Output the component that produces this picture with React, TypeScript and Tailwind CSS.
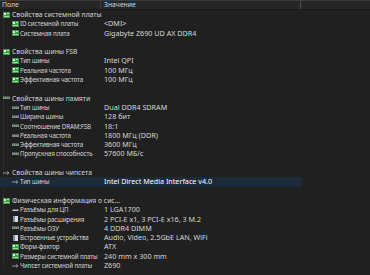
import React from 'react'

type Icon = 'board' | 'ram' | 'chip' | 'socket' | 'card'
type Row =
  | { kind: 'blank' }
  | { kind: 'group'; icon: Icon; label: string }
  | { kind: 'item'; icon: Icon; label: string; value: string; selected?: boolean }

const rows: Row[] = [
  { kind: 'group', icon: 'board', label: 'Свойства системной платы' },
  { kind: 'item', icon: 'board', label: 'ID системной платы', value: '<DMI>' },
  { kind: 'item', icon: 'board', label: 'Системная плата', value: 'Gigabyte Z690 UD AX DDR4' },
  { kind: 'blank' },
  { kind: 'group', icon: 'board', label: 'Свойства шины FSB' },
  { kind: 'item', icon: 'board', label: 'Тип шины', value: 'Intel QPI' },
  { kind: 'item', icon: 'board', label: 'Реальная частота', value: '100 МГц' },
  { kind: 'item', icon: 'board', label: 'Эффективная частота', value: '100 МГц' },
  { kind: 'blank' },
  { kind: 'group', icon: 'ram', label: 'Свойства шины памяти' },
  { kind: 'item', icon: 'ram', label: 'Тип шины', value: 'Dual DDR4 SDRAM' },
  { kind: 'item', icon: 'ram', label: 'Ширина шины', value: '128 бит' },
  { kind: 'item', icon: 'ram', label: 'Соотношение DRAM:FSB', value: '18:1' },
  { kind: 'item', icon: 'ram', label: 'Реальная частота', value: '1800 МГц (DDR)' },
  { kind: 'item', icon: 'ram', label: 'Эффективная частота', value: '3600 МГц' },
  { kind: 'item', icon: 'ram', label: 'Пропускная способность', value: '57600 МБ/с' },
  { kind: 'blank' },
  { kind: 'group', icon: 'chip', label: 'Свойства шины чипсета' },
  { kind: 'item', icon: 'chip', label: 'Тип шины', value: 'Intel Direct Media Interface v4.0', selected: true },
  { kind: 'blank' },
  { kind: 'group', icon: 'board', label: 'Физическая информация о сис...' },
  { kind: 'item', icon: 'socket', label: 'Разъёмы для ЦП', value: '1 LGA1700' },
  { kind: 'item', icon: 'card', label: 'Разъёмы расширения', value: '2 PCI-E x1, 3 PCI-E x16, 3 M.2' },
  { kind: 'item', icon: 'ram', label: 'Разъёмы ОЗУ', value: '4 DDR4 DIMM' },
  { kind: 'item', icon: 'card', label: 'Встроенные устройства', value: 'Audio, Video, 2.5GbE LAN, WiFi' },
  { kind: 'item', icon: 'board', label: 'Форм-фактор', value: 'ATX' },
  { kind: 'item', icon: 'board', label: 'Размеры системной платы', value: '240 mm x 300 mm' },
  { kind: 'item', icon: 'chip', label: 'Чипсет системной платы', value: 'Z690' },
]

function RowIcon({ icon }: { icon: Icon }) {
  if (icon === 'board')
    return (
      <svg width="7" height="6" viewBox="0 0 7 6" className="shrink-0">
        <rect x="0" y="0" width="7" height="6" fill="#3f9a4a" />
        <rect x="1" y="1" width="2" height="2" fill="#d9f0d0" />
        <rect x="4" y="1" width="2" height="1" fill="#b8e2b0" />
        <rect x="1" y="4" width="5" height="1" fill="#a8d8a0" />
      </svg>
    )
  if (icon === 'ram')
    return (
      <svg width="7" height="6" viewBox="0 0 7 6" className="shrink-0">
        <rect x="0" y="1.5" width="7" height="2.5" fill="#8a8f8a" />
        <rect x="1" y="2" width="1" height="1.5" fill="#4f7f4f" />
        <rect x="3" y="2" width="1" height="1.5" fill="#4f7f4f" />
        <rect x="5" y="2" width="1" height="1.5" fill="#4f7f4f" />
      </svg>
    )
  if (icon === 'chip')
    return (
      <svg width="7" height="6" viewBox="0 0 7 6" className="shrink-0">
        <path d="M0 3h6M4 1.5 6 3 4 4.5" stroke="#8d96a0" strokeWidth="1" fill="none" />
      </svg>
    )
  if (icon === 'socket')
    return (
      <svg width="7" height="6" viewBox="0 0 7 6" className="shrink-0">
        <rect x="0.5" y="2.5" width="6" height="1.5" fill="#c8c8c8" />
      </svg>
    )
  return (
    <svg width="7" height="6" viewBox="0 0 7 6" className="shrink-0">
      <rect x="1" y="0" width="5" height="6" fill="#d8dde3" />
      <rect x="1" y="0" width="2" height="6" fill="#7c8aa0" />
    </svg>
  )
}

export default function App() {
  return (
    <div
      className="w-[370px] h-[275px] overflow-hidden bg-[#202020] text-[#d6d6d6] text-[7.2px] leading-[9.3px]"
      style={{ fontFamily: '"Noto Sans", "Open Sans", sans-serif' }}
    >
      {/* шапка таблицы */}
      <div className="flex h-[10px] bg-[#262626] border-t border-[#3c3c3c] border-b border-b-[#1a1a1a] leading-[8px] text-[6.8px]">
        <div className="w-[101px] flex items-center pl-[2px] border-r border-[#3a3a3a]">Поле</div>
        <div className="w-[200px] flex items-center pl-[3px] border-r border-[#4a4a4a]">Значение</div>
        <div className="flex-1" />
      </div>
      <div className="relative">
        <div className="absolute left-[3px] top-0 bottom-0 w-px bg-[#2c2c2c]" />
        {rows.map((r, i) =>
          r.kind === 'blank' ? (
            <div key={i} className="h-[9.3px]" />
          ) : r.kind === 'group' ? (
            <div key={i} className="relative flex items-center h-[9.3px] w-[101px] pl-[3px] gap-[2px] text-[6.8px]">
              <RowIcon icon={r.icon} />
              <span className="whitespace-nowrap">{r.label}</span>
            </div>
          ) : (
            <div
              key={i}
              className={`relative flex items-center h-[9.3px] w-[302px] ${r.selected ? 'bg-[#1d2a37]' : ''}`}
            >
              <div className="w-[101px] shrink-0 flex items-center pl-[12px] gap-[1px] text-[6.2px] tracking-[-0.12px]">
                <RowIcon icon={r.icon} />
                <span className="whitespace-nowrap">{r.label}</span>
              </div>
              <div className={`whitespace-nowrap pl-[3px] ${r.selected ? 'text-white' : ''}`}>{r.value}</div>
            </div>
          ),
        )}
      </div>
    </div>
  )
}
